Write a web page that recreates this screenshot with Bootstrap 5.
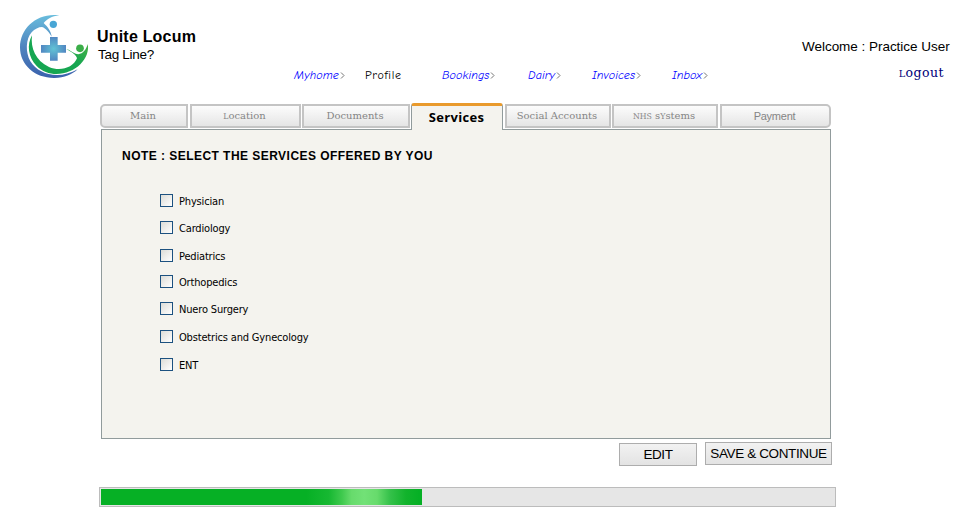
<!DOCTYPE html>
<html lang="en">
<head>
<meta charset="utf-8">
<title>Unite Locum</title>
<link href="https://cdn.jsdelivr.net/npm/bootstrap@5.3.0/dist/css/bootstrap.min.css" rel="stylesheet">
<style>
body{font-family:"Liberation Sans",Arial,sans-serif;font-size:14px;line-height:18px;color:#000;background:#fff;overflow:hidden}
.page{width:954px;height:526px}
.top{height:103px}
.logo{width:80px;height:80px;margin:5px 0 0 10px}
.brand{width:196px;margin-left:7px;padding-top:28px}
.brand h1{font-size:16px;line-height:18px;letter-spacing:.2px}
.tagline{font-size:13.5px;line-height:18px;padding:0 0 0 1px;letter-spacing:-.3px}
.menu{padding-top:66px;width:430px;font-family:"Comic Sans MS","Comic Neue","Noto Sans",sans-serif;font-size:12px;line-height:18px}
.menu a{color:#00f;font-style:italic;font-weight:500;letter-spacing:.1px;padding-left:1px;white-space:nowrap;display:flex;align-items:center}
.menu a.current{color:#000;font-style:normal;letter-spacing:.6px;padding-left:0}
.menu svg{width:5px;height:7px;margin-left:1px}
.user{width:149px;margin-left:auto;margin-right:3px;padding-top:38px;white-space:nowrap}
.welcome{font-size:13.5px;letter-spacing:-.03px;padding-right:2px}
.logout{font-family:"DejaVu Serif",serif;font-size:12.5px;color:#00007a;padding-right:7px;margin-top:8px;letter-spacing:.45px}
.lowcap{font-size:.78em}
.main{width:730px;margin-left:101px}
.tabs{height:27px;margin-left:-1px;width:731px;position:relative;z-index:1}
.tab-item{height:24px;margin-top:1px;border:2px solid #c4c4c4;background:linear-gradient(#fcfcfc,#e5e5e5);color:#858585;font-family:"DejaVu Serif",serif;font-size:10px;line-height:20px;text-align:center;white-space:nowrap;padding-right:2px}
.tab-item.active{height:27px;margin-top:0;background:#f4f3ee;border:1px solid #919b9c;border-top:3px solid #e99a2c;border-bottom:0;border-radius:3px 3px 0 0;color:#000;font:bold 13px/22px "Open Sans",sans-serif;letter-spacing:.3px;padding-right:1px}
.tab-item.plain{font-family:"Liberation Sans",sans-serif;font-size:11px;letter-spacing:-.25px}
.services{height:310px;margin-top:-1px;background:#f4f3ee;border:1px solid #919b9c;padding:17px 0 0 20px}
.services h2{font:bold 12px/18px "Liberation Sans",sans-serif;letter-spacing:.46px;margin:0}
.checks{margin:26px 0 0 38px;font-family:Tahoma,"DejaVu Sans Condensed","DejaVu Sans",sans-serif;font-size:11px;line-height:21px;letter-spacing:-.17px}
.check{height:27px;white-space:nowrap}
.check.taller{height:28px}
.check.shorter{height:26px}
.check .form-check-input{width:13px;height:13px;margin:3px 6px 0 0;border:1px solid #1c5180;border-radius:0;background:linear-gradient(135deg,#dcdcd7,#fff)}
.actions{height:30px;margin-right:-1px;padding-top:3px;gap:8px}
.action{height:23px;padding:0;border:1px solid #adadad;border-radius:0;background:linear-gradient(#f2f2f2,#e3e3e3);color:#000;font-size:13.5px;line-height:22px;white-space:nowrap;letter-spacing:-.38px}
.action.edit{margin-top:1px}
.meter{width:737px;height:20px;margin:18px 0 0 -2px;padding:1px;border:1px solid #bcbcbc;background:#e6e6e6;border-radius:0}
.meter .progress-bar{width:321px;background:linear-gradient(90deg,#06b025 64%,#17b832 71%,#3ec94d 75%,#67db6c 78%,#72e177 82%,#67db6c 86%,#35c14a 90%,#12b32c 95%,#06b025 99%)}
</style>
<script src="https://cdn.jsdelivr.net/npm/bootstrap@5.3.0/dist/js/bootstrap.bundle.min.js"></script>
</head>
<body>
<div class="page">
<header class="top d-flex align-items-start">
<svg class="logo flex-shrink-0" viewBox="0 0 240 240" aria-hidden="true">
<defs>
<linearGradient id="blue" x1=".5" y1="0" x2=".5" y2="1"><stop offset="0" stop-color="#69bddd"/><stop offset=".5" stop-color="#5084bf"/><stop offset="1" stop-color="#3a61ac"/></linearGradient>
<linearGradient id="green" x1="0" y1="1" x2="1" y2="0"><stop offset=".55" stop-color="#16a651"/><stop offset="1" stop-color="#58b642"/></linearGradient>
<radialGradient id="cross"><stop offset="0" stop-color="#62c3d5"/><stop offset="1" stop-color="#5187c2"/></radialGradient>
</defs>
<path fill="url(#blue)" d="M148 31C82 22 30 69 30 127C30 181 76 220 134 219C163 219 186 209 203 193C148 225 86 210 61 169C46 142 47 102 65 82C74 72 86 66 96 66C108 70 117 82 125 95C123 77 112 65 101 54C112 42 124 34 148 31Z"/>
<path fill="url(#green)" d="M66 91C50 120 54 156 80 183C116 220 178 211 211 178C230 158 237 137 233 117C228 135 219 145 205 148C191 147 183 136 169 132C187 142 199 150 201 160C190 188 151 201 117 186C77 167 61 130 66 91Z"/>
<path fill="url(#cross)" d="M120 96h23v24h25v23h-25v24h-23v-24H93v-23h27Z"/>
<circle cx="130" cy="58" r="11" fill="#48a6d5"/><circle cx="210" cy="130" r="11.5" fill="#3bae49"/>
</svg>
<div class="brand flex-shrink-0 text-nowrap"><h1 class="fw-bold m-0">Unite Locum</h1><div class="tagline"><span>Tag Line?</span></div></div>
<nav class="menu d-flex flex-shrink-0">
<a class="text-decoration-none" style="width:72px" href="#">Myhome<svg viewBox="0 0 5 7"><path d="M1 .5 4 3.5 1 6.5" fill="none" stroke="#777"/></svg></a>
<a class="text-decoration-none current" style="width:76px" href="#">Profile</a>
<a class="text-decoration-none" style="width:86px" href="#">Bookings<svg viewBox="0 0 5 7"><path d="M1 .5 4 3.5 1 6.5" fill="none" stroke="#777"/></svg></a>
<a class="text-decoration-none" style="width:64px" href="#">Dairy<svg viewBox="0 0 5 7"><path d="M1 .5 4 3.5 1 6.5" fill="none" stroke="#777"/></svg></a>
<a class="text-decoration-none" style="width:80px" href="#">Invoices<svg viewBox="0 0 5 7"><path d="M1 .5 4 3.5 1 6.5" fill="none" stroke="#777"/></svg></a>
<a class="text-decoration-none" href="#">Inbox<svg viewBox="0 0 5 7"><path d="M1 .5 4 3.5 1 6.5" fill="none" stroke="#777"/></svg></a>
</nav>
<div class="user text-end"><div class="welcome">Welcome : Practice User</div><div class="logout"><span class="lowcap">L</span>ogout</div></div>
</header>
<main class="main">
<div class="tabs d-flex">
<div class="tab-item" style="width:88px;margin-right:2px;border-radius:5px 0 0 5px">Main</div>
<div class="tab-item" style="width:111px;margin-right:1px"><span class="lowcap">L</span>ocation</div>
<div class="tab-item" style="width:108px;margin-right:1px">Documents</div>
<div class="tab-item active" style="width:92px;margin-right:2px">Services</div>
<div class="tab-item" style="width:106px;margin-right:1px">Social Accounts</div>
<div class="tab-item" style="width:106px;margin-right:2px"><span class="lowcap">NHS</span> s<span class="lowcap">Y</span>stems</div>
<div class="tab-item plain" style="width:111px;border-radius:0 5px 5px 0">Payment</div>
</div>
<section class="services">
<h2>NOTE : SELECT THE SERVICES OFFERED BY YOU</h2>
<div class="checks">
<label class="check d-flex align-items-start"><input class="form-check-input" type="checkbox">Physician</label>
<label class="check taller d-flex align-items-start"><input class="form-check-input" type="checkbox">Cardiology</label>
<label class="check shorter d-flex align-items-start"><input class="form-check-input" type="checkbox">Pediatrics</label>
<label class="check d-flex align-items-start"><input class="form-check-input" type="checkbox">Orthopedics</label>
<label class="check taller d-flex align-items-start"><input class="form-check-input" type="checkbox">Nuero Surgery</label>
<label class="check taller d-flex align-items-start"><input class="form-check-input" type="checkbox">Obstetrics and Gynecology</label>
<label class="check d-flex align-items-start"><input class="form-check-input" type="checkbox">ENT</label>
</div>
</section>
<div class="actions d-flex justify-content-end align-items-start">
<button class="action edit btn" style="width:78px">EDIT</button>
<button class="action btn" style="width:127px">SAVE &amp; CONTINUE</button>
</div>
<div class="meter progress"><div class="progress-bar"></div></div>
</main>
</div>
</body>
</html>
